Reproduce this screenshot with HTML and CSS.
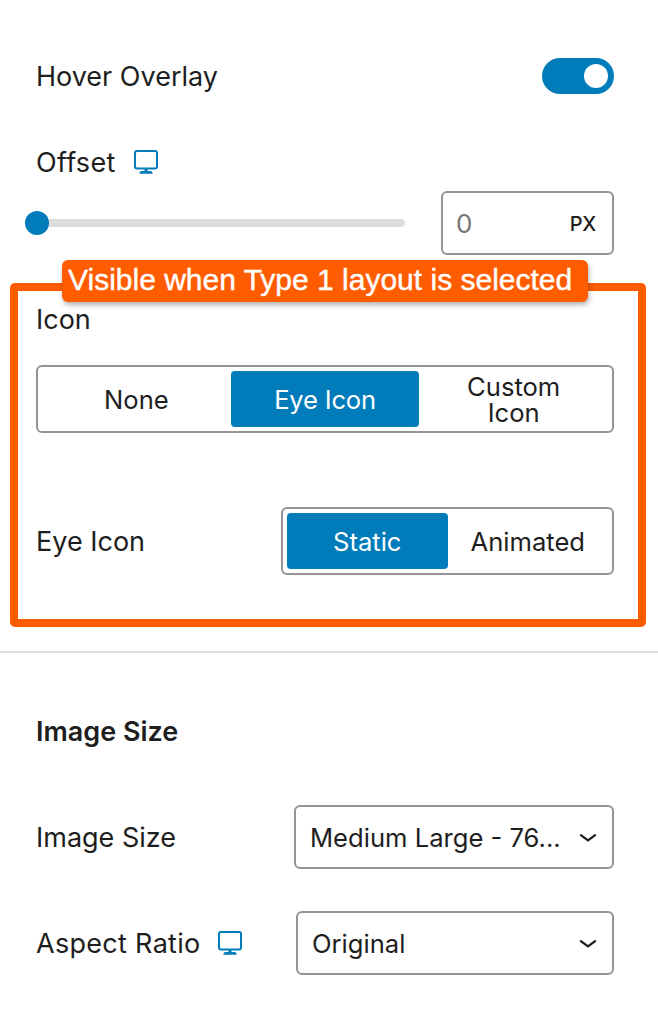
FILE: index.html
```html
<!DOCTYPE html>
<html lang="en">
<head>
<meta charset="utf-8">
<title>Hover Overlay Settings</title>
<link rel="stylesheet" href="styles.css">
</head>
<body>
<main class="panel">
  <div class="row row-toggle">
    <span class="label t-hover">Hover Overlay</span>
    <span class="toggle" role="switch" aria-checked="true"><span class="toggle-knob"></span></span>
  </div>
  <div class="row row-offset">
    <span class="label t-offset">Offset</span>
    <svg class="device" viewBox="0 0 26 26"><rect x="2" y="2" width="22" height="17.5" rx="2" fill="none" stroke="currentColor" stroke-width="2"/><path d="M11.5 20h3v2h3.2q2 .2 2 2.8H6.3q0-2.6 2-2.8h3.2z" fill="currentColor"/></svg>
  </div>
  <div class="row row-slider">
    <div class="slider"><span class="slider-track"></span><span class="slider-thumb"></span></div>
    <div class="unit-input"><span class="unit-value">0</span><span class="unit-name">PX</span></div>
  </div>

  <section class="callout-box">
    <div class="callout"><span class="t-callout">Visible when Type 1 layout is selected</span></div>
    <div class="label label-icon"><span class="t-icon">Icon</span></div>
    <div class="segments segments-icon">
      <div class="segment"><span class="t-none">None</span></div>
      <div class="segment active"><span class="t-eye">Eye Icon</span></div>
      <div class="segment"><span class="t-custom">Custom<br>Icon</span></div>
    </div>
    <div class="row row-eye">
      <span class="label t-eyelabel">Eye Icon</span>
      <div class="segments segments-eye">
        <div class="segment active"><span class="t-static">Static</span></div>
        <div class="segment"><span class="t-animated">Animated</span></div>
      </div>
    </div>
  </section>

  <hr class="divider">

  <h2 class="heading"><span class="t-heading">Image Size</span></h2>
  <div class="row row-size">
    <span class="label t-size">Image Size</span>
    <div class="select select-size"><span class="t-medium">Medium Large - 76...</span><svg class="chevron" viewBox="0 0 18 10"><path d="M1.2 1.6 9 7.4l7.8-5.8" fill="none" stroke="currentColor" stroke-width="2.3"/></svg></div>
  </div>
  <div class="row row-ratio">
    <span class="label t-aspect">Aspect Ratio</span>
    <svg class="device" viewBox="0 0 26 26"><rect x="2" y="2" width="22" height="17.5" rx="2" fill="none" stroke="currentColor" stroke-width="2"/><path d="M11.5 20h3v2h3.2q2 .2 2 2.8H6.3q0-2.6 2-2.8h3.2z" fill="currentColor"/></svg>
    <div class="select select-ratio"><span class="t-original">Original</span><svg class="chevron" viewBox="0 0 18 10"><path d="M1.2 1.6 9 7.4l7.8-5.8" fill="none" stroke="currentColor" stroke-width="2.3"/></svg></div>
  </div>
</main>
</body>
</html>
```
FILE: styles.css
```css
* { box-sizing: border-box; }

body {
  margin: 0;
  background: #fff;
  color: #1e1e1e;
  font-family: Inter, "Liberation Sans", sans-serif;
  font-size: 26px;
  line-height: 32px;
}

.panel {
  display: flow-root;
  width: 658px;
  height: 1028px;
  overflow: hidden;
}

.row {
  display: flex;
  align-items: center;
  padding: 0 44px 0 36px;
}

.label { padding-top: 1px; font-size: 27px; white-space: nowrap; }

.row-toggle { justify-content: space-between; height: 36px; margin-top: 58px; }

.toggle {
  display: flex;
  justify-content: flex-end;
  align-items: center;
  width: 72px;
  height: 36px;
  padding: 0 6px;
  border-radius: 18px;
  background: #007cba;
}

.toggle-knob { width: 24px; height: 24px; border-radius: 50%; background: #fff; }

.row-offset { height: 32px; margin-top: 52px; }

.device { width: 26px; height: 26px; color: #007cba; flex: none; }
.row-offset .t-offset { width: 97px; letter-spacing: .3px; }

.row-slider { height: 64px; margin-top: 13px; padding-left: 25px; justify-content: space-between; }

.slider {
  display: grid;
  align-items: center;
  width: 380px;
  height: 24px;
}

.slider-track, .slider-thumb { grid-area: 1 / 1; }
.slider-track { height: 8px; margin-left: 12px; border-radius: 4px; background: #ddd; }
.slider-thumb { width: 24px; height: 24px; border-radius: 50%; background: #007cba; }

.unit-input {
  display: flex;
  align-items: center;
  justify-content: space-between;
  width: 173px;
  height: 64px;
  padding: 2px 16px 0 13px;
  border: 2px solid #949494;
  border-radius: 6px;
}

.unit-value { color: #757575; }
.unit-name { font-size: 20px; font-weight: 500; letter-spacing: -.3px; }

.callout-box {
  position: relative;
  height: 344px;
  margin: 28px 12px 0 10px;
  padding: 12px 24px 0 18px;
  border: 8px solid #ff5c00;
  border-radius: 5px;
}

.callout {
  position: absolute;
  top: -31px;
  left: 44px;
  width: 526px;
  height: 42px;
  padding-left: 6px;
  border-radius: 6px;
  background: #ff5c00;
  color: #fff;
  font-family: "Liberation Sans", sans-serif;
  font-size: 30px;
  line-height: 40px;
  white-space: nowrap;
  -webkit-text-stroke: .4px #fff;
  box-shadow: 1px 3px 5px rgba(0, 0, 0, .3);
}

.label-icon { height: 32px; }

.segments {
  display: flex;
  height: 68px;
  padding: 4px;
  border: 2px solid #949494;
  border-radius: 6px;
}

.segments-icon { margin-top: 30px; }
.segments-eye { width: 333px; margin-left: auto; }

.segment {
  display: flex;
  flex: 1 1 0;
  align-items: center;
  justify-content: center;
  padding-top: 2px;
  border-radius: 4px;
  font-size: 25.6px;
  text-align: center;
  line-height: 26px;
  white-space: nowrap;
}

.segment.active { background: #007cba; color: #fff; }
.t-eye { letter-spacing: -.2px; }

.row-eye { height: 68px; margin-top: 74px; padding: 0; }

.divider { height: 2px; margin: 24px 0 0; border: 0; background: #ddd; }

.heading {
  height: 32px;
  margin: 63px 0 0 36px;
  font-size: 27px;
  font-weight: 600;
}

.row-size { height: 64px; margin-top: 57px; }
.row-ratio { height: 64px; margin-top: 42px; }
.t-aspect { width: 181px; letter-spacing: .3px; }

.select {
  display: flex;
  align-items: center;
  justify-content: space-between;
  height: 64px;
  margin-left: auto;
  padding: 2px 15px 0 14px;
  border: 2px solid #949494;
  border-radius: 6px;
  font-size: 25.6px;
  white-space: nowrap;
}

.select-size { width: 320px; }
.select-ratio { width: 318px; }
.chevron { width: 18px; height: 10px; flex: none; }
```
